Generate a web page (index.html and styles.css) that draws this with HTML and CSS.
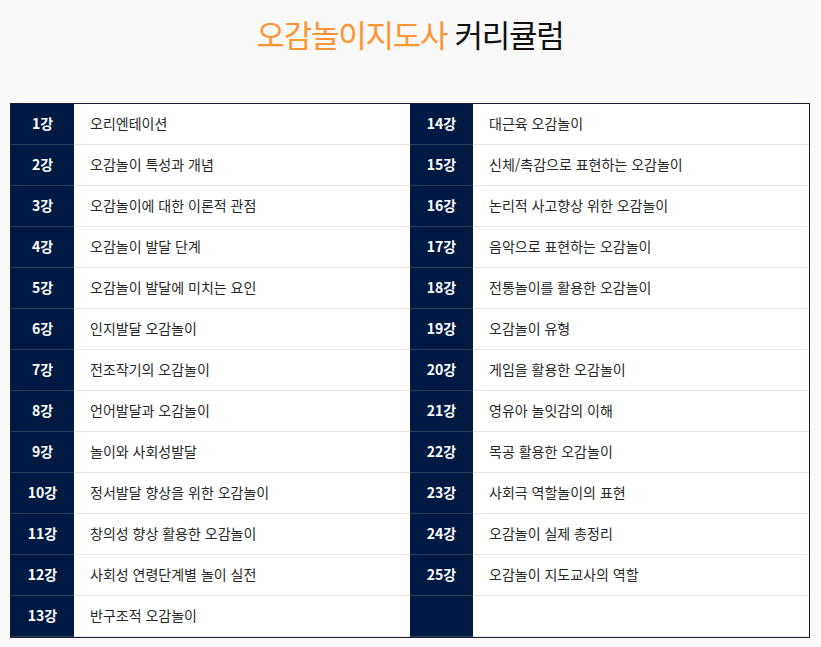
FILE: index.html
```html
<!DOCTYPE html>
<html lang="ko">
<head>
<meta charset="utf-8">
<title>오감놀이지도사 커리큘럼</title>
<link rel="stylesheet" href="styles.css">
</head>
<body>
<div class="page">
  <h1 class="title"><span class="accent">오감놀이지도사</span> 커리큘럼</h1>
  <div class="board">
    <div class="col">
      <div class="row"><div class="num">1강</div><div class="txt">오리엔테이션</div></div>
      <div class="row"><div class="num">2강</div><div class="txt">오감놀이 특성과 개념</div></div>
      <div class="row"><div class="num">3강</div><div class="txt">오감놀이에 대한 이론적 관점</div></div>
      <div class="row"><div class="num">4강</div><div class="txt">오감놀이 발달 단계</div></div>
      <div class="row"><div class="num">5강</div><div class="txt">오감놀이 발달에 미치는 요인</div></div>
      <div class="row"><div class="num">6강</div><div class="txt">인지발달 오감놀이</div></div>
      <div class="row"><div class="num">7강</div><div class="txt">전조작기의 오감놀이</div></div>
      <div class="row"><div class="num">8강</div><div class="txt">언어발달과 오감놀이</div></div>
      <div class="row"><div class="num">9강</div><div class="txt">놀이와 사회성발달</div></div>
      <div class="row"><div class="num">10강</div><div class="txt">정서발달 향상을 위한 오감놀이</div></div>
      <div class="row"><div class="num">11강</div><div class="txt">창의성 향상 활용한 오감놀이</div></div>
      <div class="row"><div class="num">12강</div><div class="txt">사회성 연령단계별 놀이 실전</div></div>
      <div class="row"><div class="num">13강</div><div class="txt">반구조적 오감놀이</div></div>
    </div>
    <div class="col">
      <div class="row"><div class="num">14강</div><div class="txt">대근육 오감놀이</div></div>
      <div class="row"><div class="num">15강</div><div class="txt">신체/촉감으로 표현하는 오감놀이</div></div>
      <div class="row"><div class="num">16강</div><div class="txt">논리적 사고향상 위한 오감놀이</div></div>
      <div class="row"><div class="num">17강</div><div class="txt">음악으로 표현하는 오감놀이</div></div>
      <div class="row"><div class="num">18강</div><div class="txt">전통놀이를 활용한 오감놀이</div></div>
      <div class="row"><div class="num">19강</div><div class="txt">오감놀이 유형</div></div>
      <div class="row"><div class="num">20강</div><div class="txt">게임을 활용한 오감놀이</div></div>
      <div class="row"><div class="num">21강</div><div class="txt">영유아 놀잇감의 이해</div></div>
      <div class="row"><div class="num">22강</div><div class="txt">목공 활용한 오감놀이</div></div>
      <div class="row"><div class="num">23강</div><div class="txt">사회극 역할놀이의 표현</div></div>
      <div class="row"><div class="num">24강</div><div class="txt">오감놀이 실제 총정리</div></div>
      <div class="row"><div class="num">25강</div><div class="txt">오감놀이 지도교사의 역할</div></div>
      <div class="row"><div class="num"></div><div class="txt"></div></div>
    </div>
  </div>
</div>
</body>
</html>
```

FILE: styles.css
```css
html, body {
  margin: 0;
  padding: 0;
  background: #f9f9f9;
}
body {
  font-family: "Noto Sans CJK KR", "Noto Sans", sans-serif;
  color: #222;
}
.page {
  width: 800px;
  margin: 0 0 0 10px;
  padding-top: 11px;
}
.title {
  margin: 0;
  height: 92px;
  text-align: center;
  font-size: 31px;
  font-weight: 400;
  line-height: 46px;
  letter-spacing: -1.3px;
  color: #111;
}
.accent {
  color: #ff9433;
}
.board {
  display: grid;
  grid-template-columns: 1fr 1fr;
  border: 1px solid #1c1a33;
  background: #fff;
}
.col {
  display: flex;
  flex-direction: column;
}
.row {
  display: flex;
  height: 41px;
}
.num {
  width: 63px;
  flex: none;
  background: #011a43;
  color: #fff;
  font-weight: 700;
  font-size: 14px;
  display: flex;
  align-items: center;
  justify-content: center;
  padding-bottom: 2px;
  border-bottom: 1px solid #2a3d5e;
}
.txt {
  flex: 1;
  display: flex;
  align-items: center;
  padding-left: 16px;
  padding-bottom: 2px;
  font-size: 14px;
  color: #282828;
  border-bottom: 1px solid #e8e8e8;
}
```
